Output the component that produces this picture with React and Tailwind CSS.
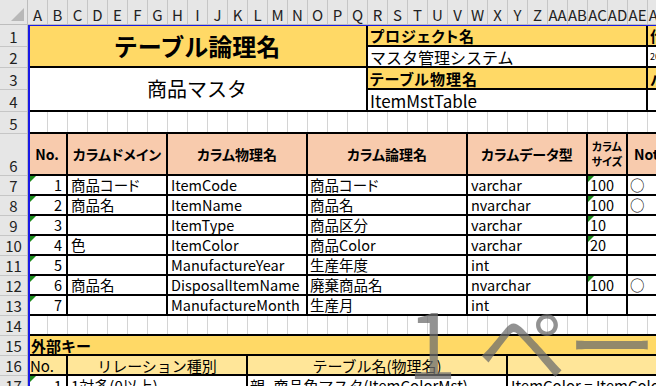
const COLS = [
  'A', 'B', 'C', 'D', 'E', 'F', 'G', 'H', 'I', 'J', 'K', 'L', 'M', 'N', 'O', 'P', 'Q',
  'R', 'S', 'T', 'U', 'V', 'W', 'X', 'Y', 'Z', 'AA', 'AB', 'AC', 'AD', 'AE', 'AF', 'AG',
]

const ROWS = [
  { n: 1, h: 'h-[22px]' },
  { n: 2, h: 'h-[21px]' },
  { n: 3, h: 'h-[22px]' },
  { n: 4, h: 'h-[22px]' },
  { n: 5, h: 'h-[22px]' },
  { n: 6, h: 'h-[42px]' },
  { n: 7, h: 'h-[20px]' },
  { n: 8, h: 'h-[20px]' },
  { n: 9, h: 'h-[20px]' },
  { n: 10, h: 'h-[20px]' },
  { n: 11, h: 'h-[20px]' },
  { n: 12, h: 'h-[20px]' },
  { n: 13, h: 'h-[20px]' },
  { n: 14, h: 'h-[20px]' },
  { n: 15, h: 'h-[20px]' },
  { n: 16, h: 'h-[20px]' },
  { n: 17, h: 'h-[20px]' },
]

const columns = [
  { no: '1', domain: '商品コード', phys: 'ItemCode', logic: '商品コード', type: 'varchar', size: '100', notNull: true },
  { no: '2', domain: '商品名', phys: 'ItemName', logic: '商品名', type: 'nvarchar', size: '100', notNull: true },
  { no: '3', domain: '', phys: 'ItemType', logic: '商品区分', type: 'varchar', size: '10', notNull: false },
  { no: '4', domain: '色', phys: 'ItemColor', logic: '商品Color', type: 'varchar', size: '20', notNull: false },
  { no: '5', domain: '', phys: 'ManufactureYear', logic: '生産年度', type: 'int', size: '', notNull: false },
  { no: '6', domain: '商品名', phys: 'DisposalItemName', logic: '廃棄商品名', type: 'nvarchar', size: '100', notNull: true },
  { no: '7', domain: '', phys: 'ManufactureMonth', logic: '生産月', type: 'int', size: '', notNull: false },
]

function ErrorMark({ className }) {
  return (
    <span
      className={`absolute top-0 w-0 h-0 border-t-[6px] border-r-[6px] border-t-[#1c8a1c] border-r-transparent ${className}`}
    />
  )
}

function GridRow() {
  return (
    <div className="flex h-[20px] shrink-0 border-b-2 border-black">
      {COLS.slice(0, 32).map((c) => (
        <div key={c} className="w-5 h-full shrink-0 border-r border-[#d4d4d4]" />
      ))}
    </div>
  )
}

export default function App() {
  return (
    <div className="relative w-[656px] h-[386px] overflow-hidden bg-white text-black font-['Noto_Sans_CJK_JP',sans-serif]">
      {/* column letters */}
      <div className="flex h-[25px] bg-[#e6e6e6] border-b border-[#bdbdbd]">
        <div className="relative w-[28px] shrink-0 border-r border-[#bdbdbd]">
          <svg className="absolute right-[3px] bottom-[3px]" width="13" height="13" viewBox="0 0 13 13">
            <polygon points="13,0 13,13 0,13" fill="#b8b8b8" />
          </svg>
        </div>
        {COLS.map((c) => (
          <div
            key={c}
            className="w-5 shrink-0 flex items-end justify-center pb-[2px] overflow-hidden border-r border-[#c6c6c6] text-[15px] leading-none text-[#222] whitespace-nowrap"
          >
            {c}
          </div>
        ))}
      </div>

      <div className="flex">
        {/* row numbers */}
        <div className="w-[28px] shrink-0 flex flex-col bg-[#e6e6e6] border-r border-[#bdbdbd]">
          {ROWS.map((r) => (
            <div
              key={r.n}
              className={`${r.h} shrink-0 flex items-end justify-center border-b border-[#c6c6c6] text-[15px] leading-[19px] text-[#222]`}
            >
              {r.n}
            </div>
          ))}
        </div>

        {/* sheet */}
        <div className="relative w-[640px] shrink-0 flex flex-col">
          {/* header block rows 1-4 */}
          <div className="flex h-[87px] shrink-0">
            <div className="w-[340px] shrink-0 flex flex-col border-r-2 border-black">
              <div className="h-[43px] flex items-center justify-center bg-[#ffd966] border-b-2 border-black text-[24px] font-bold leading-none">
                テーブル論理名
              </div>
              <div className="h-[44px] flex items-center justify-center border-b-2 border-black text-[20px] leading-none">
                商品マスタ
              </div>
            </div>
            <div className="w-[280px] shrink-0 flex flex-col border-r-2 border-black">
              <div className="h-[22px] flex items-center pl-[2px] bg-[#ffd966] border-b-2 border-black text-[15px] font-bold leading-none [font-feature-settings:'palt'] tracking-[1px]">
                プロジェクト名
              </div>
              <div className="h-[21px] flex items-center pl-[2px] border-b-2 border-black text-[16px] leading-none">
                マスタ管理システム
              </div>
              <div className="h-[22px] flex items-center pl-[2px] bg-[#ffd966] border-b-2 border-black text-[15px] font-bold leading-none [font-feature-settings:'palt'] tracking-[1px]">
                テーブル物理名
              </div>
              <div className="h-[22px] flex items-center pl-[2px] border-b-2 border-black text-[17px] leading-none">
                ItemMstTable
              </div>
            </div>
            <div className="flex-1 flex flex-col overflow-hidden whitespace-nowrap">
              <div className="h-[22px] flex items-center pl-[2px] bg-[#ffd966] border-b-2 border-black text-[15px] font-bold leading-none">
                作成者
              </div>
              <div className="h-[21px] flex items-center pl-[2px] border-b-2 border-black text-[9px] leading-none">
                2020/04/01
              </div>
              <div className="h-[22px] flex items-center pl-[2px] bg-[#ffd966] border-b-2 border-black text-[15px] font-bold leading-none">
                バージョン
              </div>
              <div className="h-[22px] border-b-2 border-black" />
            </div>
          </div>

          {/* row 5 */}
          <div className="flex h-[22px] shrink-0 border-b-2 border-black">
            {COLS.slice(0, 32).map((c) => (
              <div key={c} className="w-5 h-full shrink-0 border-r border-[#d4d4d4]" />
            ))}
          </div>

          {/* row 6 column heading */}
          <div className="flex h-[42px] shrink-0 bg-[#f8cbad] border-b-2 border-black font-bold text-[14px] leading-none [font-feature-settings:'palt'] whitespace-nowrap">
            <div className="w-[40px] shrink-0 flex items-center justify-center border-r-2 border-black">No.</div>
            <div className="w-[100px] shrink-0 flex items-center justify-center border-r-2 border-black">カラムドメイン</div>
            <div className="w-[140px] shrink-0 flex items-center justify-center border-r-2 border-black">カラム物理名</div>
            <div className="w-[160px] shrink-0 flex items-center justify-center border-r-2 border-black">カラム論理名</div>
            <div className="w-[120px] shrink-0 flex items-center justify-center border-r-2 border-black">カラムデータ型</div>
            <div className="w-[40px] shrink-0 flex flex-col items-center justify-center border-r-2 border-black text-[11px] leading-[15px]">
              <span>カラム</span>
              <span>サイズ</span>
            </div>
            <div className="w-[40px] shrink-0 flex items-center pl-[6px] border-r-2 border-black overflow-hidden">Not Null</div>
          </div>

          {/* rows 7-13 */}
          {columns.map((col) => (
            <div key={col.no} className="flex h-[20px] shrink-0 border-b-2 border-black text-[14.5px] leading-none whitespace-nowrap">
              <div className="relative w-[40px] shrink-0 flex items-center justify-end pr-[4px] border-r-2 border-black">
                <ErrorMark className="left-[2px]" />
                {col.no}
              </div>
              <div className="w-[100px] shrink-0 flex items-center pl-[3px] border-r-2 border-black [font-feature-settings:'palt'] overflow-hidden">
                {col.domain}
              </div>
              <div className="w-[140px] shrink-0 flex items-center pl-[3px] border-r-2 border-black overflow-hidden">
                {col.phys}
              </div>
              <div className="w-[160px] shrink-0 flex items-center pl-[2px] border-r-2 border-black [font-feature-settings:'palt'] overflow-hidden">
                {col.logic}
              </div>
              <div className="w-[120px] shrink-0 flex items-center pl-[3px] border-r-2 border-black overflow-hidden">
                {col.type}
              </div>
              <div className="relative w-[40px] shrink-0 flex items-center pl-[2px] border-r-2 border-black">
                {col.size && <ErrorMark className="left-0" />}
                {col.size}
              </div>
              <div className="w-[40px] shrink-0 flex items-center pl-[2px] border-r-2 border-black">
                {col.notNull ? '○' : ''}
              </div>
            </div>
          ))}

          {/* row 14 */}
          <GridRow />

          {/* row 15 */}
          <div className="flex items-center h-[20px] shrink-0 pl-[3px] bg-[#ffd966] border-b-2 border-black text-[15px] font-bold leading-none">
            外部キー
          </div>

          {/* row 16 */}
          <div className="flex h-[20px] shrink-0 bg-[#ffe699] border-b-2 border-black text-[15px] leading-none whitespace-nowrap">
            <div className="w-[40px] shrink-0 flex items-center pl-[2px] border-r-2 border-black">No.</div>
            <div className="w-[180px] shrink-0 flex items-center justify-center border-r-2 border-black">リレーション種別</div>
            <div className="w-[260px] shrink-0 flex items-center justify-center border-r-2 border-black">テーブル名(物理名)</div>
            <div className="flex-1" />
          </div>

          {/* row 17 */}
          <div className="flex h-[20px] shrink-0 border-b-2 border-black text-[15px] leading-none whitespace-nowrap">
            <div className="relative w-[40px] shrink-0 flex items-center justify-end pr-[4px] border-r-2 border-black">
              <ErrorMark className="left-[2px]" />1
            </div>
            <div className="w-[180px] shrink-0 flex items-center pl-[3px] border-r-2 border-black">1対多(0以上)</div>
            <div className="w-[260px] shrink-0 flex items-center pl-[2px] border-r-2 border-black overflow-hidden">
              親_商品色マスタ(ItemColorMst)
            </div>
            <div className="flex-1 flex items-center pl-[3px] overflow-hidden">ItemColor = ItemColor</div>
          </div>

          {/* page break border */}
          <div className="absolute inset-0 border-l-2 border-t border-[#1a1ae6] pointer-events-none" />
        </div>
      </div>

      {/* page watermark */}
      <div className="absolute left-[407px] top-[295px] text-[90px] leading-none whitespace-nowrap text-[#6e6e6e]/75 pointer-events-none">
        1 ページ
      </div>
    </div>
  )
}
